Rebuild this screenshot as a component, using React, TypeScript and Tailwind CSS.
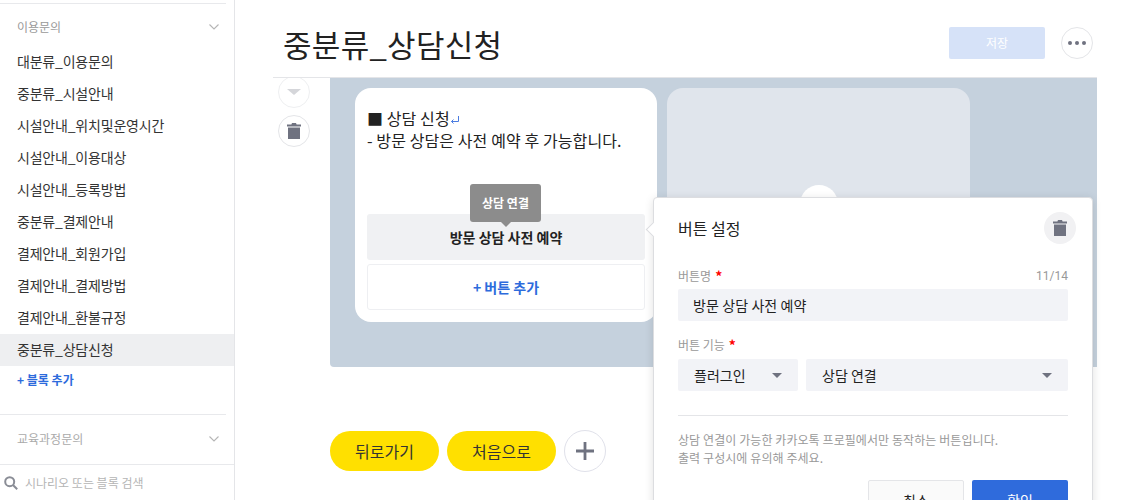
const font = { fontFamily: '"Noto Sans CJK KR", "Noto Sans", sans-serif' }

const items = [
    "대분류_이용문의",
    "중분류_시설안내",
    "시설안내_위치및운영시간",
    "시설안내_이용대상",
    "시설안내_등록방법",
    "중분류_결제안내",
    "결제안내_회원가입",
    "결제안내_결제방법",
    "결제안내_환불규정",
    "중분류_상담신청",
]

const Trash = ({ className }: { className?: string }) => (
    <svg viewBox="0 0 14 16" className={className} fill="#6f7280">
        <path d="M5 0h4l.6 1.5H14v2H0v-2h4.4z" />
        <path d="M1 4.5h12V16H1z" />
    </svg>
)

const Chevron = () => (
    <svg width="10" height="6" viewBox="0 0 10 6" fill="none" stroke="#b5b5b5" strokeWidth="1.1">
        <path d="M.5.5 5 5 9.5.5" />
    </svg>
)

const Caret = () => <div className="w-0 h-0 border-x-[5px] border-x-transparent border-t-[5px] border-t-[#6f7280]" />

const Star = () => <span className="text-[#f00] text-[14px] leading-none ml-[4px] font-bold">*</span>

function Sidebar() {
    return (
        <div className="w-[235px] h-[500px] shrink-0 border-r border-[#e4e5e8] flex flex-col overflow-hidden">
            <div className="mt-[3px] w-[226px] h-px bg-[#e8e9ec]" />
            <div className="flex items-center justify-between pl-[17px] pr-[15px] h-[46px] shrink-0">
                <span className="text-[12px] text-[#999]">이용문의</span>
                <Chevron />
            </div>
            <div className="-mt-[4px]">
                {items.map((item, i) => (
                    <div key={item} className={"h-[32px] pl-[17px] pb-[2px] flex items-center text-[14px] tracking-[-0.2px] text-[#333] " + (i === 9 ? "bg-[#eeeff1]" : "")}>
                        {item}
                    </div>
                ))}
            </div>
            <div className="pl-[17px] h-[28px] flex items-center text-[12px] font-bold text-[#2d6bdc]">+ 블록 추가</div>
            <div className="mt-[20px] w-[226px] h-px bg-[#e8e9ec]" />
            <div className="flex items-center justify-between pl-[17px] pr-[15px] pb-[2px] h-[49px] shrink-0">
                <span className="text-[12px] text-[#aaa]">교육과정문의</span>
                <Chevron />
            </div>
            <div className="h-px bg-[#e8e9ec]" />
            <div className="flex items-center gap-[7px] pl-[4px] h-[35px]">
                <svg width="14" height="14" viewBox="0 0 14 14" fill="none" stroke="#8a8d96" strokeWidth="2">
                    <circle cx="5.7" cy="5.7" r="4.5" />
                    <path d="m9 9 4.2 4.2" />
                </svg>
                <span className="text-[12px] text-[#b5b5b5]">시나리오 또는 블록 검색</span>
            </div>
        </div>
    )
}

function Popover() {
    return (
        <div className="absolute left-[653px] top-[197px] w-[440px] h-[360px] bg-white border border-[#dcdde0] rounded-[4px] shadow-[0_2px_10px_rgba(0,0,0,0.12)] px-[24px]">
            <div className="absolute -left-[6px] top-[26px] w-[11px] h-[11px] rotate-45 bg-white border-l border-b border-[#dcdde0]" />
            <div className="flex items-center justify-between h-[60px] -mr-[8px]">
                <span className="text-[16px] text-[#222]">버튼 설정</span>
                <div className="w-[32px] h-[32px] rounded-full bg-[#f1f1f3] flex items-center justify-center">
                    <Trash className="w-[14px] h-[16px]" />
                </div>
            </div>
            <div className="flex items-center justify-between h-[31px] pt-[5px] text-[12px] text-[#999]">
                <span className="flex items-center">버튼명<Star /></span>
                <span className="text-[12px]" style={{ fontFamily: '"Roboto", sans-serif' }}>11/14</span>
            </div>
            <div className="h-[32px] bg-[#f2f3f7] rounded-[2px] pl-[15px] flex items-center text-[14px] tracking-[0.1px] text-[#222]">방문 상담 사전 예약</div>
            <div className="flex items-center h-[38px] pt-[10px] text-[12px] text-[#999]">
                <span className="flex items-center">버튼 기능<Star /></span>
            </div>
            <div className="flex gap-[8px]">
                <div className="w-[120px] h-[32px] bg-[#f2f3f7] rounded-[2px] pl-[16px] pr-[16px] flex items-center justify-between text-[14px] text-[#222]">
                    플러그인
                    <Caret />
                </div>
                <div className="flex-1 h-[32px] bg-[#f2f3f7] rounded-[2px] pl-[16px] pr-[16px] flex items-center justify-between text-[14px] text-[#222]">
                    상담 연결
                    <Caret />
                </div>
            </div>
            <div className="mt-[24px] h-px bg-[#e4e5e8]" />
            <p className="mt-[15px] text-[12px] leading-[18px] tracking-[0.08px] text-[#999]">
                상담 연결이 가능한 카카오톡 프로필에서만 동작하는 버튼입니다.<br />
                출력 구성시에 유의해 주세요.
            </p>
            <div className="flex justify-end gap-[8px] mt-[13px]">
                <div className="w-[96px] h-[40px] border border-[#e4e5e8] bg-[#fafafa] rounded-[2px] flex items-center justify-center text-[14px] text-[#222]">취소</div>
                <div className="w-[96px] h-[40px] bg-[#2f6bdc] rounded-[2px] flex items-center justify-center text-[14px] text-white">확인</div>
            </div>
        </div>
    )
}

function Card() {
    return (
        <div className="relative w-[302px] h-[234px] bg-white rounded-[16px] px-[12px] shrink-0">
            <div className="pt-[19px] h-[126px] text-[16px] leading-[22px] tracking-[0.1px] text-[#222]">
                <div className="flex items-center">
                    <span>■ 상담 신청</span>
                    <svg width="10" height="10" viewBox="0 0 10 10" fill="none" stroke="#4a7be0" strokeWidth="1" className="mt-[3px]">
                        <path d="M8.5 1v5.5H1.5M3.5 4.5l-2 2 2 2" />
                    </svg>
                </div>
                <div>- 방문 상담은 사전 예약 후 가능합니다.</div>
            </div>
            <div className="relative h-[46px] bg-[#f0f1f3] rounded-[3px] flex items-center justify-center text-[14px] font-bold text-[#222]">
                방문 상담 사전 예약
                <div className="absolute left-[103px] -top-[30px] w-[71px] h-[38px] bg-[#8c8c8c] rounded-[3px] flex items-center justify-center text-[12px] font-bold text-white">
                    상담 연결
                    <div className="absolute left-[30px] -bottom-[5px] w-0 h-0 border-x-[6px] border-x-transparent border-t-[6px] border-t-[#8c8c8c]" />
                </div>
            </div>
            <div className="mt-[4px] h-[46px] border border-[#eeeff2] rounded-[3px] flex items-center justify-center text-[14px] font-bold text-[#2d6bdc]">+ 버튼 추가</div>
        </div>
    )
}

export default function App() {
    return (
        <div className="relative w-[1132px] h-[500px] overflow-hidden bg-white flex" style={font}>
            <Sidebar />
            <div className="flex-1 min-w-0 pl-[38px] pr-[35px]">
                <div className="h-[78px] border-b border-[#e4e5e8] flex items-center justify-between pl-[10px]">
                    <h1 className="text-[31px] tracking-[0.3px] text-[#222] pt-[10px] leading-[46px]">중분류_상담신청</h1>
                    <div className="flex items-center gap-[16px] pt-[9px] mr-[4px]">
                        <div className="w-[96px] h-[32px] bg-[#d6e2f8] rounded-[2px] flex items-center justify-center text-[12px] text-white">저장</div>
                        <div className="w-[32px] h-[32px] rounded-full border border-[#e4e5e8] flex items-center justify-center gap-[3px]">
                            <span className="w-[4px] h-[4px] rounded-full bg-[#6f7280]" />
                            <span className="w-[4px] h-[4px] rounded-full bg-[#6f7280]" />
                            <span className="w-[4px] h-[4px] rounded-full bg-[#6f7280]" />
                        </div>
                    </div>
                </div>
                <div className="flex h-[289px] overflow-hidden">
                    <div className="w-[57px] shrink-0 pl-[5px] flex flex-col gap-[7px] -mt-[2px]">
                        <div className="w-[32px] h-[32px] rounded-full border border-[#eeeff1] flex items-center justify-center">
                            <div className="w-0 h-0 border-x-[7px] border-x-transparent border-t-[6px] border-t-[#d5d6da]" />
                        </div>
                        <div className="w-[32px] h-[32px] rounded-full border border-[#e4e5e8] flex items-center justify-center">
                            <Trash className="w-[14px] h-[16px]" />
                        </div>
                    </div>
                    <div className="flex-1 bg-[#c5d1dd] rounded-bl-[4px] pt-[10px] pl-[25px] flex gap-[10px]">
                        <Card />
                        <div className="relative w-[303px] h-[234px] bg-[#e0e5ec] rounded-[16px] shrink-0 flex justify-center pt-[97px]">
                            <div className="w-[38px] h-[38px] rounded-full bg-white" />
                        </div>
                    </div>
                </div>
                <div className="flex items-center gap-[8px] mt-[63px] ml-[57px]">
                    <div className="w-[109px] h-[40px] rounded-full bg-[#ffe000] flex items-center justify-center text-[16px] text-[#333]">뒤로가기</div>
                    <div className="w-[109px] h-[40px] rounded-full bg-[#ffe000] flex items-center justify-center text-[16px] text-[#333]">처음으로</div>
                    <div className="w-[42px] h-[42px] rounded-full border border-[#e0e1ea] flex items-center justify-center">
                        <svg width="18" height="18" viewBox="0 0 18 18" fill="#6f7280">
                            <path d="M7.6 0h2.8v7.6H18v2.8h-7.6V18H7.6v-7.6H0V7.6h7.6z" />
                        </svg>
                    </div>
                </div>
            </div>
            <Popover />
        </div>
    )
}
